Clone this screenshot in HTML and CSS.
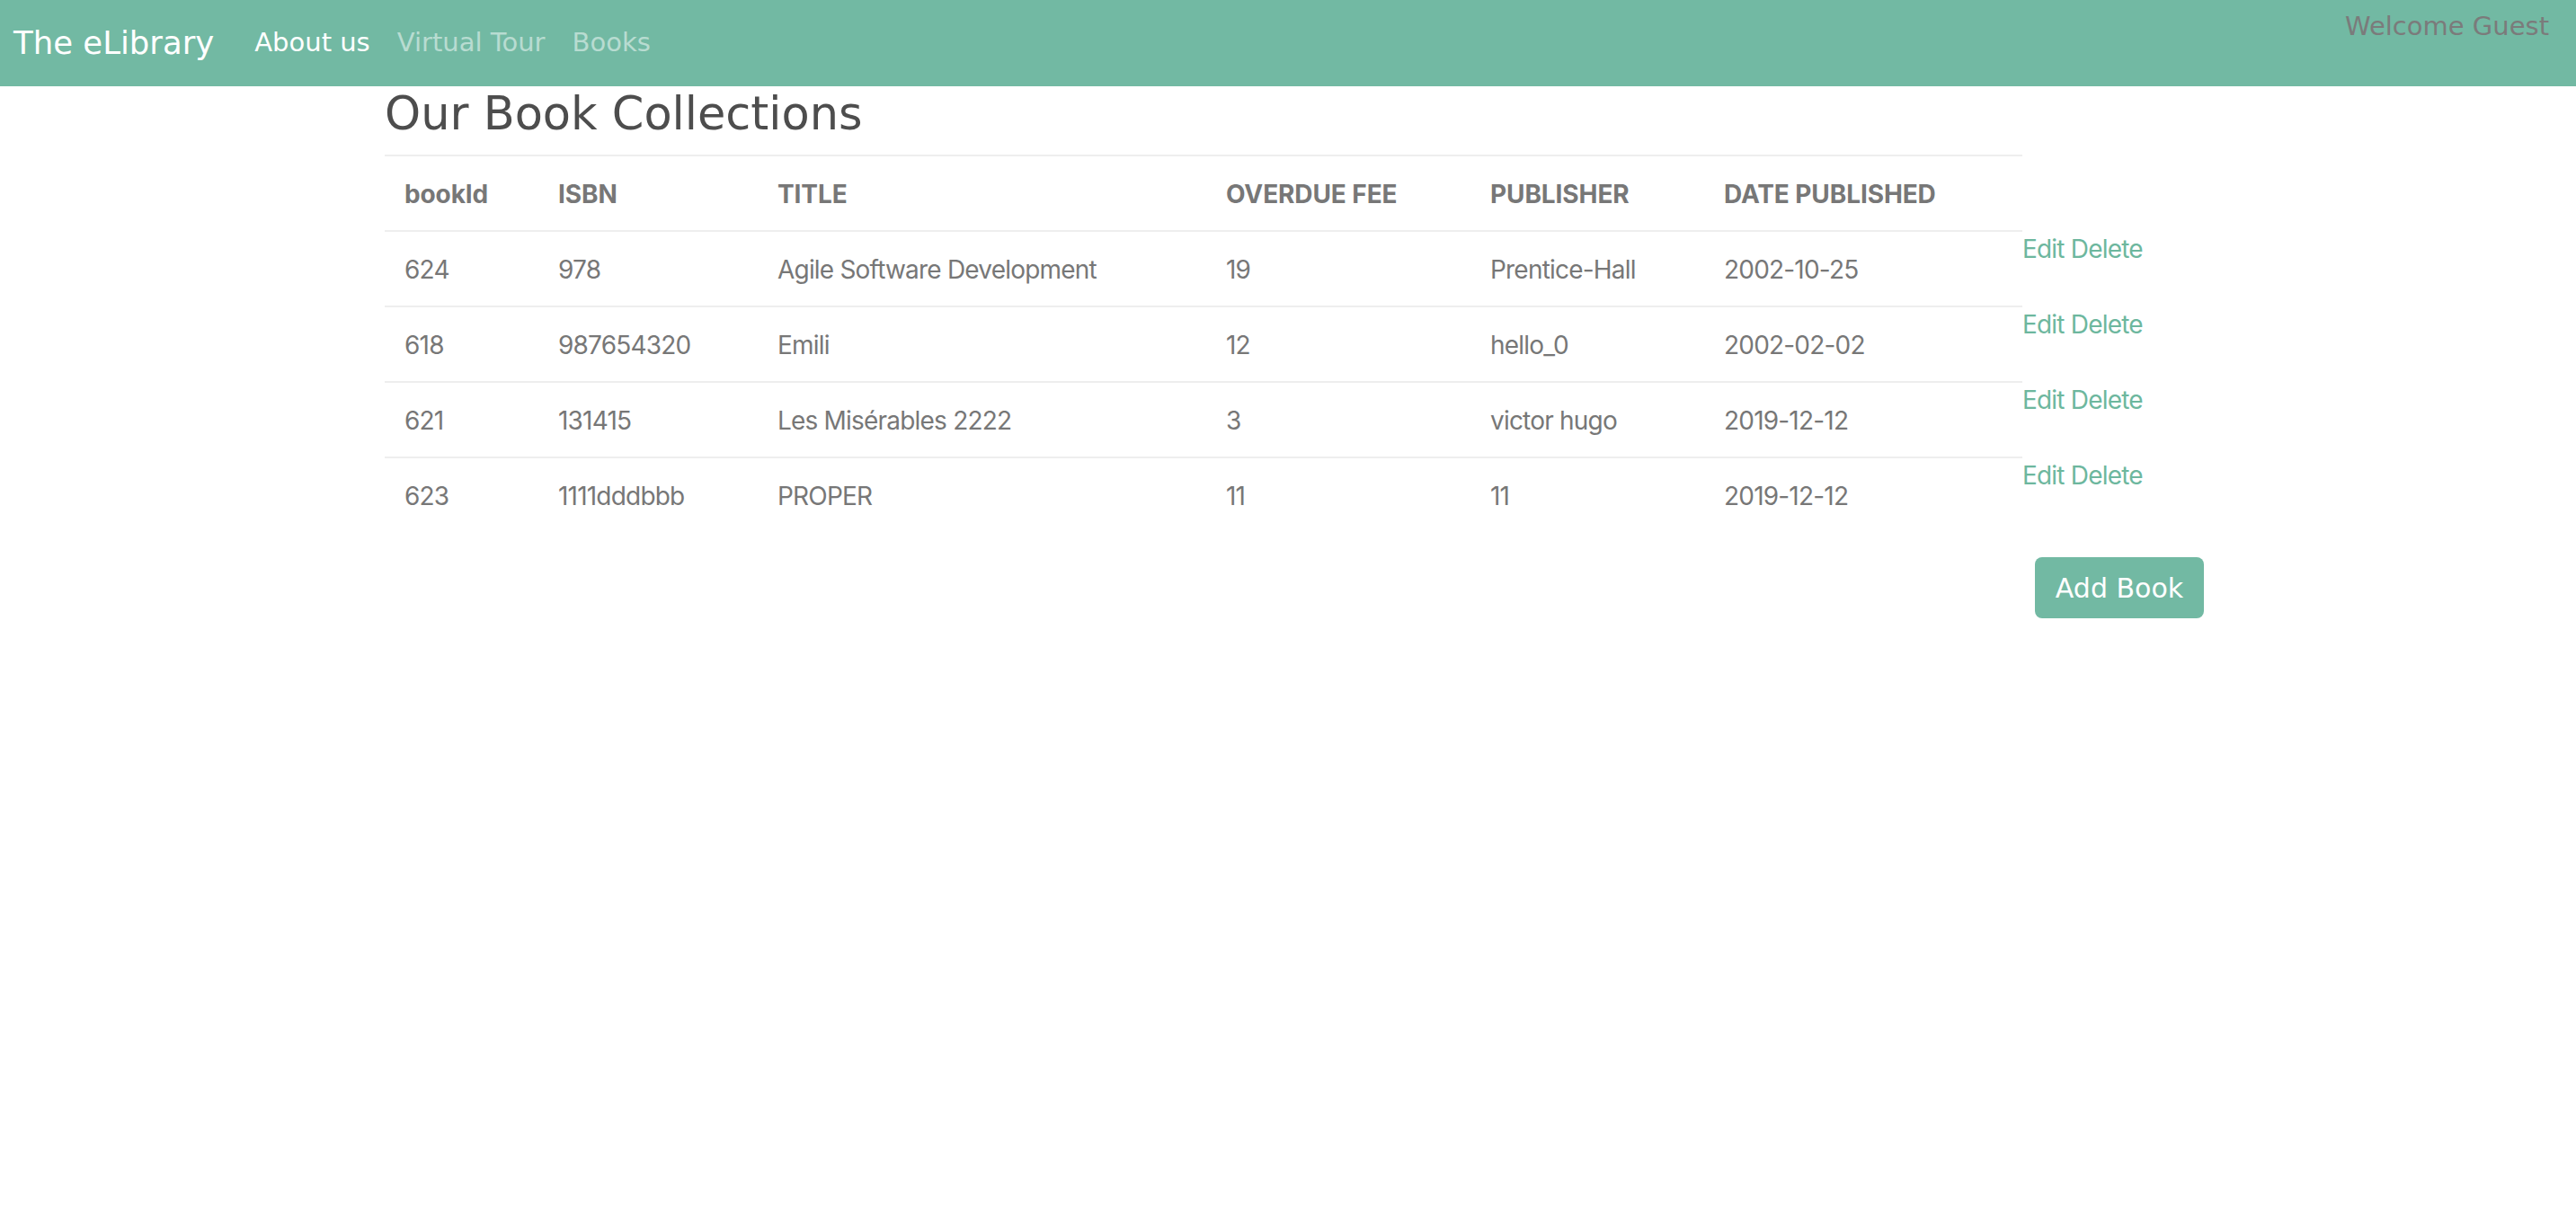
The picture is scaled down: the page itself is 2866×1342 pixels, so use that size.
FILE: index.html
```html
<!DOCTYPE html>
<html lang="en">
<head>
<meta charset="utf-8">
<title>The eLibrary</title>
<link rel="stylesheet" href="styles.css">
</head>
<body>
<nav class="navbar">
  <a class="brand" href="#">The eLibrary</a>
  <ul class="nav-links">
    <li><a class="nav-link active" href="#">About us</a></li>
    <li><a class="nav-link" href="#">Virtual Tour</a></li>
    <li><a class="nav-link" href="#">Books</a></li>
  </ul>
  <div class="welcome">Welcome Guest</div>
</nav>
<main class="content">
  <h2 class="page-title">Our Book Collections</h2>
  <table class="books">
    <colgroup>
      <col class="c-id"><col class="c-isbn"><col class="c-title"><col class="c-fee"><col class="c-pub"><col class="c-date"><col class="c-act">
    </colgroup>
    <thead>
      <tr>
        <th>bookId</th><th>ISBN</th><th>TITLE</th><th>OVERDUE FEE</th><th>PUBLISHER</th><th>DATE PUBLISHED</th><th class="act"></th>
      </tr>
    </thead>
    <tbody>
      <tr><td>624</td><td>978</td><td>Agile Software Development</td><td>19</td><td>Prentice-Hall</td><td>2002-10-25</td><td class="act"><a href="#">Edit</a> <a href="#">Delete</a></td></tr>
      <tr><td>618</td><td>987654320</td><td>Emili</td><td>12</td><td>hello_0</td><td>2002-02-02</td><td class="act"><a href="#">Edit</a> <a href="#">Delete</a></td></tr>
      <tr><td>621</td><td>131415</td><td>Les Misérables 2222</td><td>3</td><td>victor hugo</td><td>2019-12-12</td><td class="act"><a href="#">Edit</a> <a href="#">Delete</a></td></tr>
      <tr><td>623</td><td>1111dddbbb</td><td>PROPER</td><td>11</td><td>11</td><td>2019-12-12</td><td class="act"><a href="#">Edit</a> <a href="#">Delete</a></td></tr>
    </tbody>
  </table>
  <div class="actions">
    <button class="btn-add" type="button">Add Book</button>
  </div>
</main>
</body>
</html>
```
FILE: styles.css
```css
html, body {
  margin: 0;
  padding: 0;
  background: #ffffff;
}
body {
  font-family: Inter, "Liberation Sans", sans-serif;
  color: #777777;
}
a {
  text-decoration: none;
}

/* Navbar */
.navbar {
  height: 96px;
  box-sizing: border-box;
  background: #72b9a3;
  display: flex;
  align-items: center;
  padding: 0 30px 0 15px;
  font-family: "DejaVu Sans", sans-serif;
}
.brand {
  color: #ffffff;
  font-size: 35.5px;
  line-height: 50px;
  margin-right: 45px;
}
.nav-links {
  display: flex;
  gap: 30px;
  list-style: none;
  margin: 0;
  padding: 0 0 2px 0;
}
.nav-link {
  color: rgba(255, 255, 255, 0.5);
  font-size: 29px;
  line-height: 40px;
}
.nav-link.active {
  color: #ffffff;
}
.welcome {
  margin-left: auto;
  align-self: flex-start;
  padding-top: 9px;
  color: #7b7b7b;
  font-size: 29px;
  line-height: 40px;
}

/* Content */
.content {
  margin-left: 428px;
  width: 2024px;
}
.page-title {
  margin: 1px 0 15px 0;
  font-family: "DejaVu Sans", sans-serif;
  font-weight: normal;
  font-size: 51px;
  line-height: 60px;
  color: #4d4d4d;
}

.books {
  border-collapse: separate;
  border-spacing: 0;
  table-layout: fixed;
  width: 1962px;
  font-size: 28px;
  letter-spacing: -0.8px;
}
.c-id { width: 171px; }
.c-isbn { width: 244px; }
.c-title { width: 499px; }
.c-fee { width: 294px; }
.c-pub { width: 260px; }
.c-date { width: 354px; }
.c-act { width: 140px; }

.books th,
.books td {
  text-align: left;
  padding: 21px 22px 19px 22px;
  line-height: 42px;
  border-top: 2px solid #eeeeee;
  white-space: nowrap;
  vertical-align: top;
}
.books th {
  font-weight: 700;
  color: #777777;
  letter-spacing: -0.1px;
}
.books td {
  color: #777777;
}
.books .act {
  border-top: none;
  padding: 0;
}
.books .act a {
  color: #6db79e;
}

.actions {
  display: flex;
  justify-content: flex-end;
  margin-top: 28px;
}
.btn-add {
  width: 188px;
  height: 68px;
  border: none;
  border-radius: 8px;
  background: #72b9a3;
  color: #ffffff;
  font-family: "DejaVu Sans", sans-serif;
  font-size: 30px;
  padding: 0;
  cursor: pointer;
}
```
